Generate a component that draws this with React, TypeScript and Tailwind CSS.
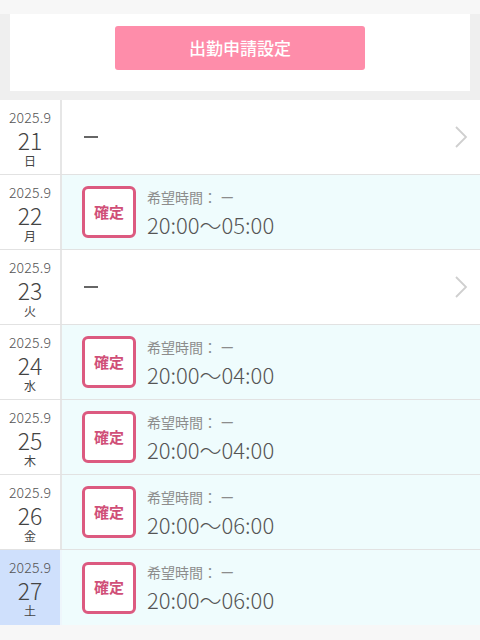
import React from "react";

type Row = { d: string; w: string; time?: string; today?: boolean };

const rows: Row[] = [
  { d: "21", w: "日" },
  { d: "22", w: "月", time: "20:00〜05:00" },
  { d: "23", w: "火" },
  { d: "24", w: "水", time: "20:00〜04:00" },
  { d: "25", w: "木", time: "20:00〜04:00" },
  { d: "26", w: "金", time: "20:00〜06:00" },
  { d: "27", w: "土", time: "20:00〜06:00", today: true },
];

function Chevron() {
  return (
    <svg width="14" height="24" viewBox="0 0 14 24" className="mr-[12px]">
      <polyline points="2,2 12,12 2,22" fill="none" stroke="#cfcfcf" strokeWidth="1.8" />
    </svg>
  );
}

export default function App() {
  return (
    <div
      className="w-[480px] h-[640px] bg-[#f7f7f7] overflow-hidden"
      style={{ fontFamily: '"Noto Sans CJK JP", "Noto Sans", sans-serif' }}
    >
      <div className="h-[14px]" />
      <div className="bg-[#efefef] px-[10px] pb-[9px]">
        <div className="bg-white h-[77px] pt-[12px] flex justify-center">
          <div className="w-[250px] h-[44px] rounded-[3px] bg-[#fe8daa] flex items-center justify-center text-white text-[17px] font-medium">
            出勤申請設定
          </div>
        </div>
      </div>
      <div>
        {rows.map((r, i) => (
          <div
            key={r.d}
            className={`flex h-[75px] ${i < rows.length - 1 ? "border-b border-[#e2e2e2]" : ""}`}
          >
            <div
              className={`w-[62px] shrink-0 flex flex-col items-center pt-[9px] border-r-2 ${
                r.today ? "bg-[#cfe0fc] border-[#eef6fb]" : "bg-white border-[#e6e6e6]"
              }`}
            >
              <div className="text-[14px] leading-[16px] text-[#555] tracking-[0.2px] font-light">2025.9</div>
              <div className="text-[23px] leading-[22px] text-[#444] mt-[4px] font-light">{r.d}</div>
              <div className="text-[12px] leading-[15px] text-[#444] mt-[2px]">{r.w}</div>
            </div>
            {r.time ? (
              <div className="flex-1 bg-[#effcfd] flex items-center pl-[20px]">
                <div className="w-[54px] h-[52px] border-[3px] border-[#dc5a80] rounded-[6px] bg-white flex items-center justify-center text-[15px] font-bold text-[#d04f78]">
                  確定
                </div>
                <div className="ml-[11px] flex flex-col mt-[2px]">
                  <div className="text-[14px] leading-[18px] text-[#8c8c8c]">希望時間： ー</div>
                  <div className="text-[22px] leading-[30px] text-[#555] mt-[3px] font-light">{r.time}</div>
                </div>
              </div>
            ) : (
              <div className="flex-1 bg-white flex items-center justify-between pl-[22px]">
                <div className="w-[14px] h-[2px] bg-[#666]" />
                <Chevron />
              </div>
            )}
          </div>
        ))}
      </div>
    </div>
  );
}
